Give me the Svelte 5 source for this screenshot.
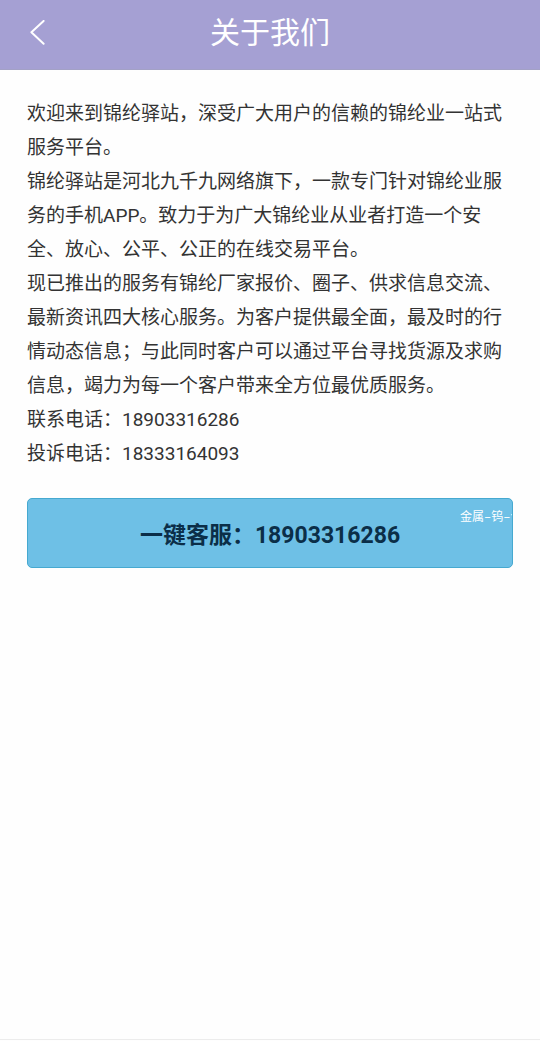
<script>
const phone = '18903316286';
const complaintPhone = '18333164093';
const watermark = '金属–钨–合';

const paragraphs = [
    '欢迎来到锦纶驿站，深受广大用户的信赖的锦纶业一站式服务平台。',
    '锦纶驿站是河北九千九网络旗下，一款专门针对锦纶业服务的手机APP。致力于为广大锦纶业从业者打造一个安全、放心、公平、公正的在线交易平台。',
    '现已推出的服务有锦纶厂家报价、圈子、供求信息交流、最新资讯四大核心服务。为客户提供最全面，最及时的行情动态信息；与此同时客户可以通过平台寻找货源及求购信息，竭力为每一个客户带来全方位最优质服务。',
    `联系电话：${phone}`,
    `投诉电话：${complaintPhone}`
];

function goBack() {
    history.back();
}

function callService() {
    window.location.href = `tel:${phone}`;
}
</script>

<div class="page" lang="zh-CN">
    <header class="top-bar">
        <button class="back-button" aria-label="返回" on:click={goBack}>
            <svg width="16" height="26" viewBox="0 0 16 26" aria-hidden="true">
                <path d="M13.6 0.9 L1.4 12.3 L13.6 23.8" />
            </svg>
        </button>
        <h1>关于我们</h1>
    </header>

    <main>
        {#each paragraphs as text}
            <p>{text}</p>
        {/each}

        <button class="service-button" on:click={callService}>
            一键客服：{phone}
            <span class="watermark" aria-hidden="true">{watermark}</span>
        </button>
    </main>
</div>

<style>
    :global(body) {
        margin: 0;
        background: #fefefe;
    }

    .page {
        box-sizing: border-box;
        min-height: calc(100vh - 1px);
        border-bottom: 1px solid #ececec;
        font-family: Roboto, "Noto Sans CJK SC", sans-serif;
        color: #333;
    }

    .top-bar {
        display: grid;
        grid-template-columns: 76px 1fr 76px;
        align-items: center;
        box-sizing: border-box;
        height: 70px;
        padding-bottom: 4px;
        background: #a5a0d3;
        border-bottom: 1px solid #a3a1c6;
    }

    .back-button {
        display: flex;
        align-items: center;
        height: 48px;
        padding: 0 0 0 30px;
        background: none;
        border: none;
        cursor: pointer;
    }

    .back-button path {
        fill: none;
        stroke: #fff;
        stroke-width: 2;
        stroke-linecap: round;
        stroke-linejoin: round;
    }

    h1 {
        margin: 0;
        font-size: 30px;
        font-weight: 400;
        line-height: 44px;
        text-align: center;
        color: #fff;
    }

    main {
        padding: 27px;
    }

    p {
        margin: 0;
        font-size: 19px;
        line-height: 34px;
    }

    .service-button {
        position: relative;
        display: block;
        width: 100%;
        height: 70px;
        margin-top: 27px;
        padding: 0;
        overflow: hidden;
        font-family: inherit;
        font-size: 23px;
        font-weight: 700;
        color: #0b2e48;
        background: #6ec0e6;
        border: 1px solid #46a9d0;
        border-radius: 5px;
        cursor: pointer;
    }

    /* sits over the corner of the button and runs off its edge */
    .watermark {
        position: absolute;
        top: 10px;
        right: 0;
        width: 52px;
        font-family: "Liberation Mono", "Noto Sans CJK SC", monospace;
        font-size: 12px;
        font-weight: 400;
        line-height: 18px;
        text-align: left;
        white-space: nowrap;
        color: #fff;
    }
</style>
